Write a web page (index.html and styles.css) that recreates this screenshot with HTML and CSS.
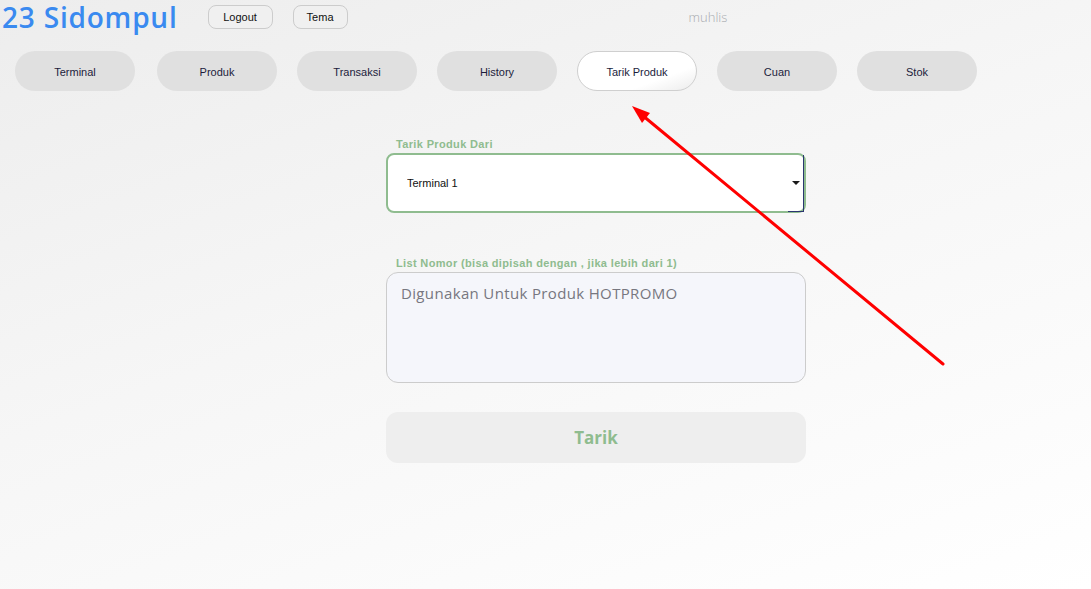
FILE: index.html
```html
<!DOCTYPE html>
<html lang="id">
<head>
    <meta charset="UTF-8">
    <meta name="viewport" content="width=device-width, initial-scale=1.0">
    <title>23 Sidompul - Tarik Produk</title>
    <link rel="stylesheet" href="styles.css">
</head>
<body>
    <header class="topbar">
        <h1 class="brand">23 Sidompul</h1>
        <button class="small-btn logout-btn">Logout</button>
        <button class="small-btn">Tema</button>
        <span class="username">muhlis</span>
    </header>

    <nav class="menu">
        <button class="menu-btn">Terminal</button>
        <button class="menu-btn">Produk</button>
        <button class="menu-btn">Transaksi</button>
        <button class="menu-btn">History</button>
        <button class="menu-btn active">Tarik Produk</button>
        <button class="menu-btn">Cuan</button>
        <button class="menu-btn">Stok</button>
    </nav>

    <main class="form">
        <label class="field-label" for="terminal">Tarik Produk Dari</label>
        <div class="select-wrap">
            <select id="terminal">
                <option>Terminal 1</option>
                <option>Terminal 2</option>
            </select>
        </div>

        <label class="field-label second" for="nomor">List Nomor (bisa dipisah dengan , jika lebih dari 1)</label>
        <textarea id="nomor" placeholder="Digunakan Untuk Produk HOTPROMO"></textarea>

        <button class="submit-btn">Tarik</button>
    </main>

    <!-- annotation arrow -->
    <svg class="annotation" width="1091" height="589" viewBox="0 0 1091 589">
        <line x1="943" y1="364" x2="642" y2="115" stroke="#ff0000" stroke-width="3" stroke-linecap="round"/>
        <polygon points="632,106 642,123 650,113" fill="#ff0000"/>
    </svg>
</body>
</html>
```

FILE: styles.css
```css
:root {
    --blue: #3a8af0;
    --green: #8fbc8f;
    --pill: #e0e0e0;
    --ink: #1c1c3c;
    --ui-font: 'Liberation Sans', Arial, sans-serif;
    --round-font: 'Open Sans', 'Noto Sans', sans-serif;
}

html, body {
    margin: 0;
    padding: 0;
}

body {
    min-height: 100vh;
    background: linear-gradient(160deg, #ededed 0%, #f6f6f6 45%, #ffffff 100%);
    font-family: var(--ui-font);
    color: var(--ink);
    position: relative;
    overflow: hidden;
}

/* header row */
.topbar {
    display: flex;
    align-items: center;
    height: 34px;
}

.brand {
    margin: 0 0 0 2px;
    font-family: var(--round-font);
    font-weight: 600;
    font-size: 28px;
    line-height: 34px;
    color: var(--blue);
    letter-spacing: 0.8px;
    white-space: nowrap;
}

.small-btn {
    margin-left: 20px;
    height: 24px;
    padding: 0;
    border: 1px solid #cccccc;
    border-radius: 8px;
    background: #f0f0f0;
    font-family: var(--ui-font);
    font-size: 11px;
    color: #111;
}

.logout-btn {
    width: 65px;
    margin-left: 30px;
}

.logout-btn + .small-btn {
    width: 55px;
}

.username {
    margin-left: 341px;
    font-family: var(--round-font);
    font-weight: 300;
    font-size: 13px;
    color: #a8abb0;
}

/* main menu */
.menu {
    display: flex;
    gap: 20px;
    margin-top: 17px;
    padding-left: 15px;
}

.menu-btn {
    width: 120px;
    height: 40px;
    border: none;
    border-radius: 20px;
    background: var(--pill);
    font-family: var(--ui-font);
    font-size: 11px;
    color: var(--ink);
    padding-top: 2px;
}

.menu-btn:first-child {
    margin-right: 2px;
}

.menu-btn.active {
    background: linear-gradient(160deg, #ffffff 0%, #ffffff 70%, #ececec 100%);
    border: 1px solid #cfcfcf;
}

/* form */
.form {
    width: 420px;
    margin: 47px 0 0 386px;
    display: flex;
    flex-direction: column;
}

.field-label {
    padding-left: 10px;
    margin-bottom: 3px;
    font-family: var(--ui-font);
    font-weight: bold;
    font-size: 11px;
    letter-spacing: 0.35px;
    color: var(--green);
}

.field-label.second {
    margin-top: 44px;
}

.select-wrap {
    position: relative;
}

.select-wrap select {
    width: 100%;
    height: 60px;
    padding: 0 0 0 19px;
    border: 2px solid var(--green);
    border-radius: 8px;
    background: #ffffff;
    appearance: none;
    -webkit-appearance: none;
    font-family: var(--ui-font);
    font-size: 11px;
    color: #111;
    outline: none;
}

/* dropdown triangle */
.select-wrap::after {
    content: '';
    position: absolute;
    right: 6px;
    top: 28px;
    border-left: 4px solid transparent;
    border-right: 4px solid transparent;
    border-top: 4px solid #1a1a1a;
    pointer-events: none;
}

/* the odd dark edge of the native box */
.select-wrap::before {
    content: '';
    position: absolute;
    right: 2px;
    top: 2px;
    bottom: 1px;
    width: 15px;
    border-right: 1px solid #2b3570;
    border-bottom: 1px solid #2b3570;
    pointer-events: none;
}

textarea {
    height: 111px;
    padding: 10px 14px;
    border: 1px solid #cccccc;
    border-radius: 12px;
    background: #f5f6fb;
    resize: none;
    font-family: var(--round-font);
    font-size: 15px;
    letter-spacing: 0.35px;
    box-sizing: border-box;
    outline: none;
}

textarea::placeholder {
    color: #777780;
}

.submit-btn {
    margin-top: 29px;
    height: 51px;
    border: none;
    border-radius: 12px;
    background: #eeeeee;
    font-family: var(--round-font);
    font-weight: 700;
    font-size: 17px;
    color: var(--green);
}

.annotation {
    position: absolute;
    top: 0;
    left: 0;
    pointer-events: none;
}
```
